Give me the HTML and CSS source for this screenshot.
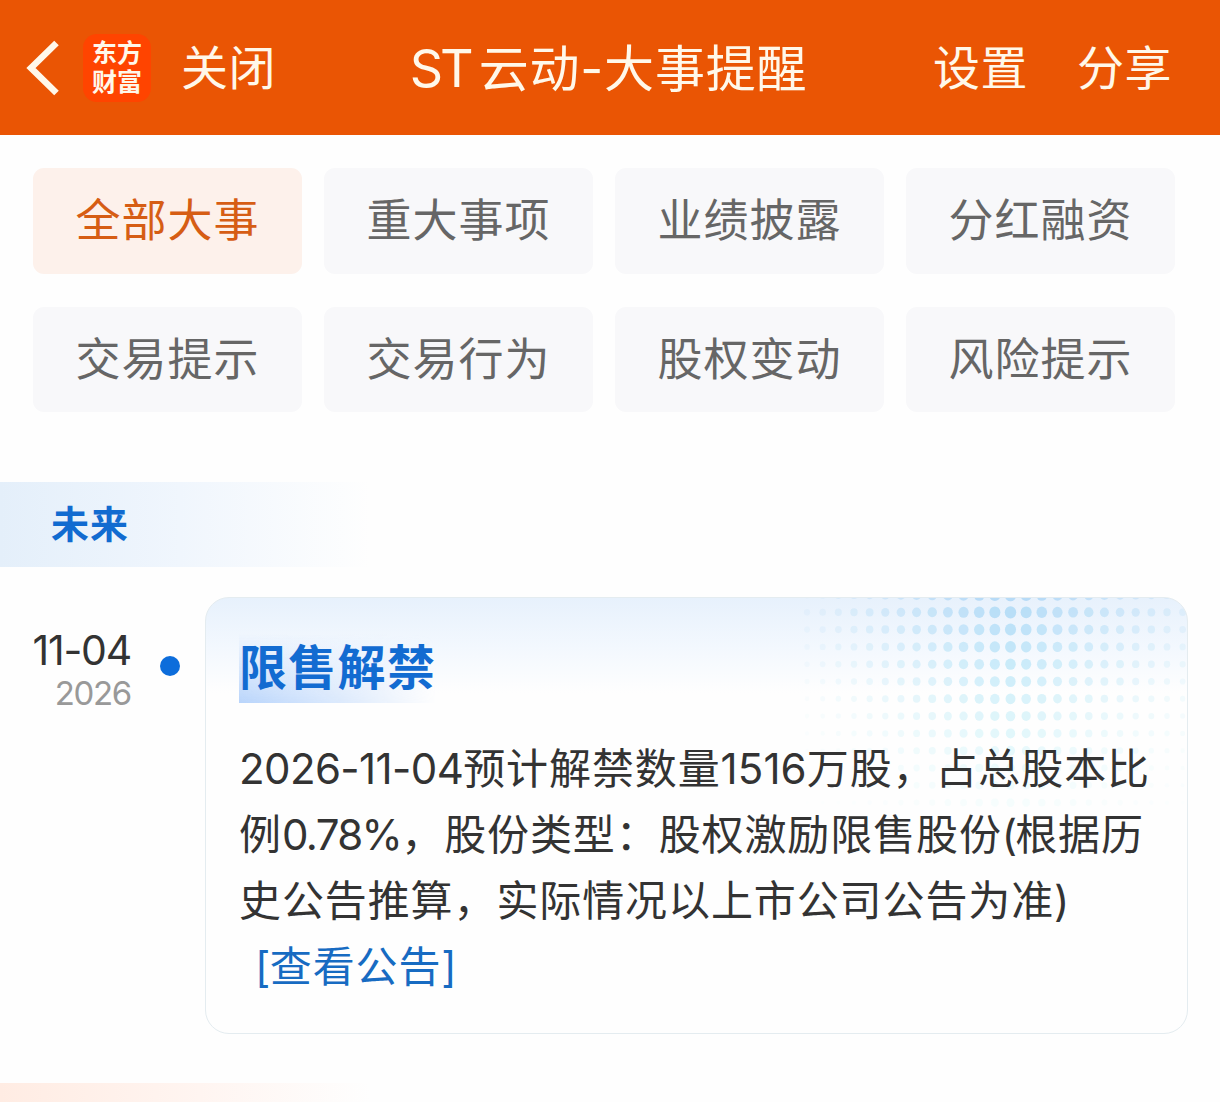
FILE: index.html
```
<!DOCTYPE html>
<html lang="zh-CN">
  <head>
    <meta charset="utf-8">
    <title>ST云动-大事提醒</title>
    <link rel="stylesheet" href="styles.css">
  </head>
  <body>

    <header class="navbar">
      <div class="nav-left">
        <svg class="back" width="36" height="60" viewBox="0 0 36 60">
          <path d="M31.5 5 L6 30 L31.5 55" fill="none" stroke="#fff8ea" stroke-width="6.5"/>
        </svg>
        <div class="logo">东方<br>财富</div>
        <span class="nav-link">关闭</span>
      </div>
      <h1 class="nav-title"><span class="latin">ST</span>云动<span class="dash">-</span>大事提醒</h1>
      <div class="nav-right">
        <span class="nav-link">设置</span>
        <span class="nav-link">分享</span>
      </div>
    </header>

    <nav class="tabs">
      <a class="tab active">全部大事</a>
      <a class="tab">重大事项</a>
      <a class="tab">业绩披露</a>
      <a class="tab">分红融资</a>
      <a class="tab">交易提示</a>
      <a class="tab">交易行为</a>
      <a class="tab">股权变动</a>
      <a class="tab">风险提示</a>
    </nav>

    <h2 class="period future">未来</h2>

    <section class="event">
      <div class="date">
        <p class="day">11-04</p>
        <p class="year">2026</p>
      </div>
      <div class="dot"></div>
      <article class="card">
        <svg class="pattern" width="400" height="215"></svg>
        <h3 class="card-title"><span>限售解禁</span></h3>
        <p class="card-text">
          <span class="num">2026-11-04</span>预计解禁数量<span class="num count">1516</span>万股，占总股本比<br>
          例<span class="num percent">0.78%</span>，股份类型：股权激励限售股份<span class="num paren">(</span>根据历<br>
          史公告推算，实际情况以上市公司公告为准<span class="num">)</span><br>
          <a class="more"><span class="num">[</span>查看公告<span class="num">]</span></a>
        </p>
      </article>
    </section>

    <div class="period past"></div>

    <script>
      // halftone dots in the card corner, biggest around the centre column
      const pattern = document.querySelector('.pattern');
      const centerX = 223.5;

      for (let row = 0; row < 13; row++) {
        for (let col = -13; col <= 11; col++) {
          const dist = Math.abs(col) * 15.65;
          const r = 6.3 - dist * 0.014 - row * 0.16;
          const fade = (1 - dist / 235) * (1 - row / 14);
          if (r <= 0 || fade <= 0) continue;

          const dot = document.createElementNS('http://www.w3.org/2000/svg', 'ellipse');
          dot.setAttribute('cx', centerX + col * 15.65);
          dot.setAttribute('cy', -3 + row * 17.3);
          dot.setAttribute('rx', r * 0.93);
          dot.setAttribute('ry', r);
          dot.setAttribute('fill', `hsl(${206 - row * 2}, 80%, ${83 + row * 0.3}%)`);
          dot.setAttribute('opacity', Math.min(0.9, fade));
          pattern.appendChild(dot);
        }
      }
    </script>
  </body>
</html>
```
FILE: styles.css
```
/* General styles */

* {
  box-sizing: border-box;
}

body {
  margin: 0;
  height: 1102px;
  overflow: hidden;
  background-color: #fefefe;
  font-family: "Noto Sans CJK SC", sans-serif;
  color: #333;
}

h1, h2, h3, p {
  margin: 0;
  font-weight: normal;
}

/* Top bar */

.navbar {
  display: grid;
  grid-template-columns: 1fr auto 1fr;
  align-items: center;
  height: 135px;
  padding: 0 48px 0 25px;
  background-color: #ea5504;
  color: #fff8ea;
  white-space: nowrap;
}

.nav-left, .nav-right {
  display: flex;
  align-items: center;
}

.nav-right {
  justify-content: flex-end;
  gap: 49px;
}

.logo {
  width: 68px;
  height: 68px;
  margin: 0 30px 0 22px;
  padding-top: 3px;
  border-radius: 14px;
  background-color: #ff4400;
  font-size: 25px;
  font-weight: bold;
  line-height: 29px;
  text-align: center;
}

.nav-link {
  padding-bottom: 6px;
  font-size: 47px;
  line-height: 60px;
  letter-spacing: 0.5px;
}

.nav-title {
  padding: 0 0 6px 20px;
  font-size: 50px;
  line-height: 60px;
  letter-spacing: 0.8px;
}

.latin {
  margin-right: 8px;
  font-family: Inter, sans-serif;
  font-size: 52px;
  letter-spacing: -3px;
  line-height: 0;
}

.dash {
  font-family: Inter, sans-serif;
  line-height: 0;
}

/* Filter tabs */

.tabs {
  display: grid;
  grid-template-columns: repeat(4, 269px);
  grid-template-rows: 106px 105px;
  gap: 33px 22px;
  padding: 33px 33px 0;
}

.tab {
  border-radius: 11px;
  background-color: #f8f8fa;
  color: #666;
  font-size: 45px;
  line-height: 100px;
  letter-spacing: 1px;
  text-align: center;
}

.tab.active {
  background-color: #fdf1eb;
  color: #d65d14;
}

/* Period headings */

.period {
  height: 85px;
  padding-left: 51px;
  font-size: 38px;
  font-weight: bold;
  line-height: 80px;
  letter-spacing: 1px;
}

.future {
  margin-top: 70px;
  background: linear-gradient(to right, #e4effa, #f0f6fd 180px, #fefefe 370px);
  color: #116bd0;
}

.past {
  height: 19px;
  margin-top: 49px;
  background: linear-gradient(to right, #ffece3, #fff5f1 200px, #fefefe 370px);
}

/* Event row */

.event {
  display: flex;
  margin-top: 30px;
}

.date {
  width: 131px;
  padding-top: 30px;
  font-family: Inter, sans-serif;
  text-align: right;
}

.day {
  font-size: 41px;
  line-height: 46px;
  letter-spacing: -1.2px;
}

.year {
  color: #999;
  font-size: 33px;
  line-height: 40px;
  letter-spacing: -1.3px;
}

.dot {
  width: 20px;
  height: 20px;
  margin: 59px 25px 0 29px;
  border-radius: 50%;
  background-color: #0d6ddb;
}

.card {
  position: relative;
  width: 983px;
  height: 437px;
  padding: 36px 0 0 33px;
  overflow: hidden;
  border: 1px solid #e4ecf0;
  border-radius: 24px;
  background: linear-gradient(#e7f1fc, #f3f8fe 50px, #fefefe 95px);
}

.pattern {
  position: absolute;
  top: 0;
  right: 0;
}

.card-title {
  position: relative;
  width: 197px;
  height: 69px;
  color: #126bd1;
  font-size: 48px;
  font-weight: bold;
  line-height: 60px;
  letter-spacing: 1.3px;
  white-space: nowrap;
}

/* highlight under the title, fading out to the right */
.card-title::before {
  content: "";
  position: absolute;
  inset: 0;
  background: linear-gradient(rgba(187, 214, 251, 0), #b8d4fb);
  -webkit-mask-image: linear-gradient(to right, #000, transparent);
  mask-image: linear-gradient(to right, #000, transparent);
}

.card-title span {
  position: relative;
}

.card-text {
  position: relative;
  margin-top: 30px;
  font-size: 42px;
  line-height: 66px;
  letter-spacing: 0.9px;
  white-space: nowrap;
}

.num {
  font-family: Inter, sans-serif;
  letter-spacing: -0.6px;
  line-height: 0;
}

.count {
  letter-spacing: 0.1px;
}

.percent {
  letter-spacing: -1.6px;
}

.paren {
  letter-spacing: -2px;
}

.more {
  margin-left: 16px;
  color: #176bc2;
}
```
